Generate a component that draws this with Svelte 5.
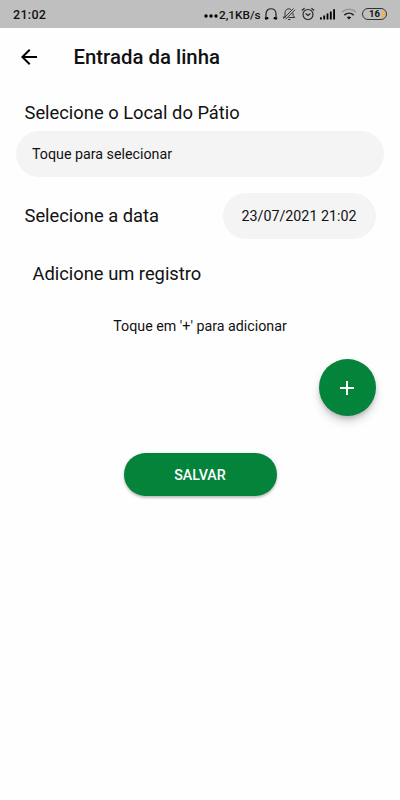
<script>
	let place = $state('');
	let date = $state('23/07/2021 21:02');

	const clock = '21:02';
	const speed = '2,1KB/s';
	const battery = 16;
</script>

<div class="screen">
	<div class="status">
		<span class="clock">{clock}</span>
		<div class="indicators">
			<svg class="dots" width="14" height="4" viewBox="0 0 14 4">
				<circle cx="2" cy="2" r="1.7" />
				<circle cx="7" cy="2" r="1.7" />
				<circle cx="12" cy="2" r="1.7" />
			</svg>
			<span class="speed">{speed}</span>
			<svg class="headphones" width="14" height="14" viewBox="0 0 14 14">
				<path d="M2 10.500V7C2 0 12 0 12 7v3.500" fill="none" stroke="#222" stroke-width="1.200" />
				<path d="M.5 10.500l3.500-.5.6 2-3.200.7zM13.500 10.500l-3.500-.5-.6 2 3.200.7z" />
			</svg>
			<svg class="bell" width="14" height="14" viewBox="0 0 14 14" fill="none" stroke="#333">
				<path d="M3.500 10.500H1.300L3 8.500V6c0-3.800 3.500-5 6-3.500M11 6v2.500l1.700 2H6.500M6 12.500h2.500" />
				<path d="M1.500 11.500l10-10M3.500 12.300L13 2.800" />
			</svg>
			<svg class="alarm" width="14" height="14" viewBox="0 0 14 14" fill="none" stroke="#222" stroke-width="1.100">
				<circle cx="7" cy="7.500" r="5" />
				<path d="M.8 3.500L3.600 1.200M13.200 3.500L10.400 1.200M4.700 6.500L7 8.500l2.400-2" />
			</svg>
			<svg class="signal" width="16" height="12" viewBox="0 0 16 12">
				<path d="M0 9.300h1.800v2.200H0zM3.300 7.500h1.800v4H3.300zM6.600 5.500h1.800v6H6.600zM9.900 3.500h1.800v8H9.900zM13.200 1.300H15v10.200h-1.800z" />
			</svg>
			<svg class="wifi" width="16" height="12" viewBox="0 0 16 12" fill="none" stroke-width="1.600">
				<path d="M1 4.300c4-4 10-4 14 0" stroke="#999" />
				<path d="M3.300 7.100c2.800-2.500 6.600-2.500 9.400 0" stroke="#222" />
				<path d="M5.800 9.300c1.400-1 3-1 4.400 0L8 11.500z" fill="#111" />
			</svg>
			<div class="battery"><span>{battery}</span><i></i></div>
		</div>
	</div>

	<header>
		<button class="back" aria-label="Voltar">
			<svg width="24" height="24" viewBox="0 0 24 24">
				<path d="M20 11H7.830l5.590-5.590L12 4l-8 8 8 8 1.410-1.410L7.830 13H20v-2z" />
			</svg>
		</button>
		<h1>Entrada da linha</h1>
	</header>

	<main>
		<h2>Selecione o Local do Pátio</h2>
		<button class="field">{place || 'Toque para selecionar'}</button>

		<div class="row">
			<h2>Selecione a data</h2>
			<button class="date">{date}</button>
		</div>

		<h2 class="records">Adicione um registro</h2>
		<p>Toque em '+' para adicionar</p>

		<button class="add" aria-label="Adicionar">
			<svg width="24" height="24" viewBox="0 0 24 24">
				<path d="M19 13h-6v6h-2v-6H5v-2h6V5h2v6h6v2z" />
			</svg>
		</button>

		<button class="save">SALVAR</button>
	</main>
</div>

<style>
	:global(body) {
		margin: 0;
		background: #fefefe;
	}
	.screen {
		height: 800px;
		overflow: hidden;
		font-family: Roboto, sans-serif;
		color: #111;
	}
	button {
		border: 0;
		padding: 0;
		font: inherit;
		color: inherit;
	}
	svg {
		display: block;
		flex: none;
	}
	.status {
		display: flex;
		align-items: center;
		justify-content: space-between;
		box-sizing: border-box;
		height: 28px;
		padding: 0 13px;
		background: #bfbfbf;
	}
	.clock {
		padding-top: 1px;
		font-size: 12.5px;
		font-weight: 500;
		letter-spacing: 0.3px;
	}
	.indicators {
		display: flex;
		align-items: center;
	}
	.dots {
		margin: 4px 1px 0 0;
	}
	.speed {
		width: 42px;
		padding-top: 1px;
		font-size: 11.8px;
		font-weight: 500;
		white-space: nowrap;
	}
	.headphones {
		margin-left: 3px;
	}
	.bell {
		margin-left: 4px;
	}
	.alarm,
	.signal,
	.wifi {
		margin-left: 5px;
	}
	.battery {
		display: flex;
		flex: none;
		align-items: center;
		justify-content: flex-end;
		box-sizing: border-box;
		width: 25px;
		height: 12px;
		margin-left: 5px;
		padding-right: 1px;
		border: 1px solid #333;
		border-radius: 6px;
		font-size: 9.5px;
		font-weight: 700;
		line-height: 10px;
	}
	.battery i {
		width: 3px;
		height: 7px;
		margin-left: 2px;
		background: #f3b04b;
		border-radius: 0 3px 3px 0;
	}
	header {
		display: flex;
		align-items: center;
		height: 58px;
		padding-left: 17px;
	}
	.back {
		background: none;
	}
	h1 {
		margin: 0 0 0 32.5px;
		font-size: 20.37px;
		font-weight: 500;
		line-height: 24px;
	}
	main {
		display: flex;
		flex-direction: column;
		padding: 16px 16px 0;
	}
	h2 {
		margin: 0 0 0 8.5px;
		font-size: 18.33px;
		font-weight: 400;
		line-height: 22px;
	}
	.field,
	.date {
		height: 46px;
		border-radius: 23px;
		background: #f4f4f4;
		font-size: 14.26px;
	}
	.field {
		margin-top: 7px;
		padding: 0 16px;
		text-align: left;
	}
	.row {
		display: flex;
		align-items: center;
		justify-content: space-between;
		margin: 16px 8.5px 0 0;
	}
	.date {
		width: 153px;
	}
	.records {
		margin: 24px 0 0 16.5px;
	}
	p {
		margin: 31px 0 0;
		font-size: 14.26px;
		line-height: 20px;
		text-align: center;
	}
	.add {
		display: flex;
		align-items: center;
		justify-content: center;
		align-self: flex-end;
		width: 57px;
		height: 57px;
		margin: 23px 8.5px 0 0;
		border-radius: 50%;
		background: #04833b;
		fill: #fff;
		box-shadow: 0 3px 5px -1px rgba(0, 0, 0, 0.2), 0 6px 10px rgba(0, 0, 0, 0.14);
	}
	.save {
		align-self: center;
		width: 153px;
		height: 43px;
		margin-top: 37px;
		border-radius: 22px;
		background: #04833b;
		color: #fff;
		font-size: 14.26px;
		font-weight: 500;
		box-shadow: 0 2px 2px rgba(0, 0, 0, 0.16), 0 1px 4px rgba(0, 0, 0, 0.14);
	}
</style>
